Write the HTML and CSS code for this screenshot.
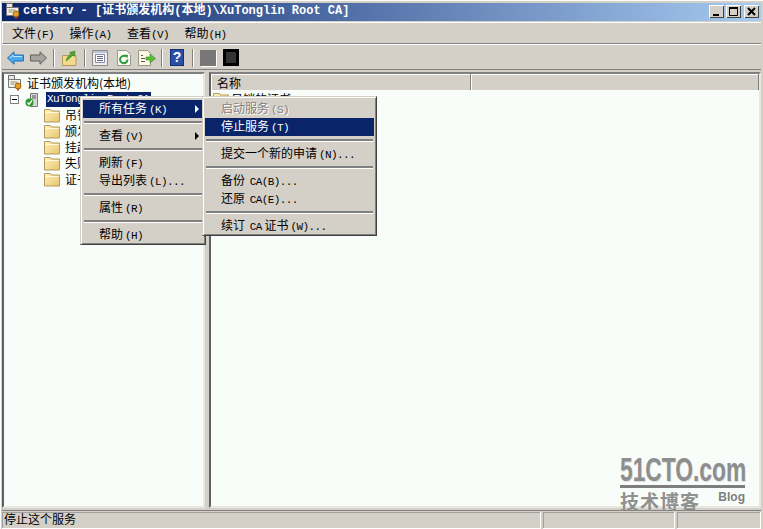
FILE: index.html
```html
<!DOCTYPE html>
<html lang="zh-CN">
<head>
<meta charset="utf-8">
<title>certsrv</title>
<link rel="stylesheet" href="styles.css">
</head>
<body>
<svg class="defs" width="0" height="0" aria-hidden="true">
  <defs>
    <linearGradient id="fold" x1="0" y1="0" x2="1" y2="1"><stop offset="0" stop-color="#fff3c0"/><stop offset="1" stop-color="#e8c56c"/></linearGradient>
    <symbol id="folder" viewBox="0 0 16 16">
      <path d="M.5 2.500h6l1 1.500h8v11H.5z" fill="url(#fold)" stroke="#b59a5a"/>
      <path d="M1 5.500h14" stroke="#fff8d8"/>
    </symbol>
    <symbol id="cert" viewBox="0 0 16 16">
      <path d="M1.500.5h6v4h-6z" fill="#e8e8e8" stroke="#6a6a6a"/>
      <path d="M1.500 4.500h12v8h-12z" fill="#f6f2e4" stroke="#777"/>
      <path d="M3.500 7h7M3.500 9h4" stroke="#8a8a8a"/>
      <circle cx="11" cy="11" r="3" fill="#e0a030" stroke="#a06810"/>
      <path d="M10 13.500v2.500l1-1 1 1v-2.500" fill="#c04020"/>
    </symbol>
  </defs>
</svg>
<div class="window">
  <header class="titlebar">
    <svg class="title-icon" width="16" height="16"><use href="#cert"/></svg>
    <span class="title-text">certsrv - [证书颁发机构(本地)\XuTonglin Root CA]</span>
    <div class="win-buttons">
      <span class="win-btn"><svg width="15" height="13"><path d="M4 9h6v2H4z" fill="#000"/></svg></span>
      <span class="win-btn"><svg width="15" height="13"><path d="M3.500 2.500h8v8h-8z" fill="none" stroke="#000"/><path d="M3 2h9v2H3z" fill="#000"/></svg></span>
      <span class="win-btn close"><svg width="15" height="13"><path d="M4 3l7 7M11 3l-7 7" stroke="#000" stroke-width="2"/></svg></span>
    </div>
  </header>

  <nav class="menubar">
    <span class="menu-top">文件<i>(F)</i></span>
    <span class="menu-top">操作<i>(A)</i></span>
    <span class="menu-top">查看<i>(V)</i></span>
    <span class="menu-top">帮助<i>(H)</i></span>
  </nav>

  <div class="toolbar">
    <svg class="tool t-back" width="17" height="14" viewBox="0 0 17 14"><path d="M.5 7L7 .8V4h9.500v6H7v3.200z" fill="#4aa8ec" stroke="#1f6fb5"/><path d="M3 7l3-3v1.500h9" fill="none" stroke="#bfe6ff"/></svg>
    <svg class="tool t-fwd" width="17" height="14" viewBox="0 0 17 14"><path d="M16.500 7L10 .8V4H.5v6H10v3.200z" fill="#a4a4a0" stroke="#5e5e5a"/></svg>
    <span class="tsep s1"></span>
    <svg class="tool t-up" width="15" height="16" viewBox="0 0 15 16"><path d="M.5 5.500h13.500v10H.5z" fill="#f2d98c" stroke="#b59a5a"/><path d="M4 11C5 7 7 5 9 4L7.500 2.500 13 1l-.5 5.500L11 5C9 7 7 9 4 11z" fill="#4ea52c" stroke="#2f7a18" stroke-width=".5"/></svg>
    <span class="tsep s2"></span>
    <svg class="tool t-doc" width="16" height="16" viewBox="0 0 16 16"><path d="M.5.5h15v15H.5z" fill="#eef0f0" stroke="#8a8a8a"/><path d="M1 1h14v2H1z" fill="#b8c4d0"/><path d="M3.500 4.500h9v8h-9z" fill="#fff" stroke="#88a"/><path d="M5 6.500h6M5 8.500h6M5 10.500h6" stroke="#667"/></svg>
    <svg class="tool t-ref" width="14" height="16" viewBox="0 0 14 16"><path d="M.5.5h9l4 4v11H.5z" fill="#fbfbf4" stroke="#9a9a90"/><path d="M10.500 9.500a3.700 3.700 0 1 1-1.500-3" fill="none" stroke="#2f9a3a" stroke-width="2"/><path d="M7.500 4.500l3.500.5-.5 3.500z" fill="#2f9a3a"/></svg>
    <svg class="tool t-exp" width="18" height="16" viewBox="0 0 18 16"><path d="M.5.5h9l3 3v12H.5z" fill="#fbf8e4" stroke="#9a9a80"/><path d="M3 5.500h2M3 8.500h4M3 11.500h4" stroke="#555"/><path d="M8 7h4V4l5.500 4.500L12 13v-3H8z" fill="#5cba3c" stroke="#338a1c" stroke-width=".6"/></svg>
    <span class="tsep s3"></span>
    <span class="tool t-help">?</span>
    <span class="tsep s4"></span>
    <span class="tool t-gray"></span>
    <span class="tool t-black"></span>
  </div>

  <main class="panes">
    <section class="tree">
      <div class="node root"><svg width="16" height="16"><use href="#cert"/></svg><span>证书颁发机构(本地)</span></div>
      <div class="node server">
        <span class="expander"></span>
        <svg class="srv" width="14" height="14" viewBox="0 0 14 14"><path d="M5.500.5h7v13h-7z" fill="#d8d8d8" stroke="#777"/><path d="M7 3h4M7 5h4" stroke="#555"/><circle cx="4.500" cy="9.500" r="4" fill="#2a9a2a"/><path d="M2.500 9.500l1.500 2 3-4" fill="none" stroke="#fff" stroke-width="1.300"/></svg>
        <span class="selected">XuTonglin Root CA</span>
      </div>
      <div class="node child"><svg width="16" height="16"><use href="#folder"/></svg><span>吊销的证书</span></div>
      <div class="node child"><svg width="16" height="16"><use href="#folder"/></svg><span>颁发的证书</span></div>
      <div class="node child"><svg width="16" height="16"><use href="#folder"/></svg><span>挂起的申请</span></div>
      <div class="node child"><svg width="16" height="16"><use href="#folder"/></svg><span>失败的申请</span></div>
      <div class="node child"><svg width="16" height="16"><use href="#folder"/></svg><span>证书模板</span></div>
    </section>
    <section class="list">
      <div class="list-head"><span class="col c1">名称</span><span class="col c2"></span></div>
      <div class="list-row"><svg width="16" height="16"><use href="#folder"/></svg><span>吊销的证书</span></div>
    </section>
  </main>

  <footer class="statusbar">
    <span class="st st1">停止这个服务</span>
    <span class="st st2"></span>
    <span class="st st3"></span>
  </footer>

  <div class="ctx ctx-left">
    <div class="item active sub">所有任务<i>(K)</i></div>
    <div class="sep"></div>
    <div class="item sub">查看<i>(V)</i></div>
    <div class="sep"></div>
    <div class="item">刷新<i>(F)</i></div>
    <div class="item">导出列表<i>(L)...</i></div>
    <div class="sep"></div>
    <div class="item">属性<i>(R)</i></div>
    <div class="sep"></div>
    <div class="item">帮助<i>(H)</i></div>
  </div>

  <div class="ctx ctx-right">
    <div class="item disabled">启动服务<i>(S)</i></div>
    <div class="item active">停止服务<i>(T)</i></div>
    <div class="sep"></div>
    <div class="item">提交一个新的申请<i>(N)...</i></div>
    <div class="sep"></div>
    <div class="item">备份 <i>CA(B)...</i></div>
    <div class="item">还原 <i>CA(E)...</i></div>
    <div class="sep"></div>
    <div class="item">续订 <i>CA</i> 证书<i>(W)...</i></div>
  </div>

  <div class="watermark">
    <div class="wm-logo"><span class="wm-word">51CTO.com</span></div>
    <div class="wm-sub"><span class="wm-cn">技术博客</span><span class="wm-blog">Blog</span></div>
  </div>
</div>
</body>
</html>
```
FILE: styles.css
```css
* { box-sizing: border-box; }
html, body { margin: 0; padding: 0; }
body { width: 763px; height: 529px; overflow: hidden; background: #d4d0c8; font: 12px/16px "Noto Sans CJK SC", "Liberation Sans", sans-serif; color: #000; }
.defs { position: absolute; }
i { font: 11px/16px "Liberation Mono", monospace; letter-spacing: -.6px; }

.window { position: relative; width: 763px; height: 529px; display: flex; flex-direction: column; padding: 3px 2px 0 2px; background: #d4d0c8; box-shadow: inset 1px 1px 0 #fff; overflow: hidden; }

.titlebar { height: 18px; flex: none; display: flex; align-items: center; padding: 0 2px 2px 3px; background: linear-gradient(90deg, #0a246a, #a6caf0); }
.title-icon { flex: none; }
.title-text { margin-left: 2px; color: #fff; font: bold 12px/16px "Liberation Mono", "Noto Sans CJK SC", monospace; white-space: nowrap; }
.win-buttons { margin-left: auto; display: flex; gap: 2px; }
.win-btn { width: 15px; height: 13px; background: #d4d0c8; box-shadow: inset 1px 1px 0 #fff, inset -1px -1px 0 #404040; display: block; }
.win-btn svg { display: block; }
.close { margin-left: 1px; }

.menubar { height: 22px; flex: none; margin-top: 1px; display: flex; align-items: center; gap: 16.500px; padding: 2px 0 0 9px; border-top: 1px solid #fff; border-bottom: 1px solid #808080; border-left: 1px solid #fff; }
.menu-top { white-space: nowrap; width: 41px; }

.toolbar { height: 26px; flex: none; display: flex; align-items: center; padding: 1px 0 0 5px; border-top: 1px solid #fff; border-bottom: 1px solid #808080; }
.tool { display: block; flex: none; }
.t-fwd { margin-left: 6px; }
.tsep { width: 2px; height: 18px; flex: none; background: #808080; border-right: 1px solid #fff; }
.s1 { margin: 0 7px 0 6px; }
.s2 { margin: 0 6px 0 7px; }
.s3 { margin: 0 7px 0 5px; }
.s4 { margin: 0 6px 0 8px; }
.t-ref { margin-left: 9px; }
.t-exp { margin-left: 7px; }
.t-help { width: 14px; height: 17px; background: #2a4fa8; border: 1px solid #14306e; color: #fff; font: bold 14px/15px "Liberation Sans", sans-serif; text-align: center; }
.t-gray { width: 16px; height: 16px; background: #777; box-shadow: 1px 1px 0 #fff; }
.t-black { width: 16px; height: 17px; margin-left: 7px; background: #333; border: 3px solid #000; }

.panes { flex: 1; min-height: 0; display: flex; gap: 4px; margin-top: 2px; }
.tree, .list { background: #f8fdf9; border: 2px solid; border-color: #808080 #e8e8e0 #e8e8e0 #606060; }
.tree { width: 203px; flex: none; overflow: hidden; padding-top: 1px; }
.list { flex: 1; min-width: 0; overflow: hidden; }

.node { display: flex; align-items: center; height: 16px; white-space: nowrap; }
.root { gap: 4px; padding-left: 3px; }
.server { height: 15px; margin-top: 1px; padding-left: 6px; }
.expander { position: relative; width: 9px; height: 9px; flex: none; border: 1px solid #808080; background: #fff; }
.expander::after { content: ""; position: absolute; left: 1px; top: 3px; width: 5px; height: 1px; background: #000; }
.srv { margin-left: 6px; flex: none; }
.selected { margin-left: 7px; width: 105px; height: 15px; background: #0a246a; color: #fff; font: 11px/15px "Liberation Mono", monospace; letter-spacing: -.6px; padding-left: 1px; }
.child { padding-left: 40px; gap: 5px; }

.list-head { display: flex; height: 16px; background: #d4d0c8; }
.col { display: block; height: 16px; border-right: 1px solid #808080; box-shadow: inset 1px 1px 0 #fff; padding-left: 6px; line-height: 17px; }
.c1 { width: 260px; }
.c2 { flex: 1; }
.list-row { display: flex; align-items: center; gap: 2px; height: 16px; padding-left: 2px; margin-top: 1px; }

.statusbar { height: 19px; flex: none; margin-top: 2px; display: flex; gap: 2px; border-top: 1px solid #808080; padding-top: 1px; }
.st { height: 17px; box-shadow: inset -1px -1px 0 #fff, inset 1px 1px 0 #a0a0a0; padding-left: 2px; line-height: 13px; }
.st1 { width: 539px; }
.st2 { width: 132px; }
.st3 { flex: 1; }

.ctx { position: absolute; top: 96px; background: #d4d0c8; padding: 3px 2px; border: 1px solid; border-color: #d4d0c8 #404040 #404040 #d4d0c8; box-shadow: inset 1px 1px 0 #fff, inset -1px -1px 0 #808080; }
.ctx-left { left: 80px; width: 126px; height: 149px; }
.ctx-right { left: 202px; width: 175px; height: 140px; }
.item { position: relative; height: 18px; line-height: 16px; padding-left: 16px; white-space: nowrap; }
.item i { margin-left: 2px; }
.active { background: #0a246a; color: #fff; }
.disabled { color: #808080; text-shadow: 1px 1px 0 #fff; }
.sub::after { content: ""; position: absolute; right: 4px; top: 5px; border: 4px solid transparent; border-left-color: currentColor; border-right-width: 0; }
.sep { height: 9px; position: relative; }
.sep::before { content: ""; position: absolute; left: 1px; right: 1px; top: 3px; height: 2px; background: #808080; border-bottom: 1px solid #fff; }

.watermark { position: absolute; left: 620px; top: 455px; width: 125px; pointer-events: none; }
.wm-logo { height: 33px; border-bottom: 3px solid #7e7e7e; }
.wm-word { display: block; width: 176px; font: bold 33px/30px "Liberation Sans", sans-serif; color: #8e8e8e; white-space: nowrap; text-shadow: 1px 1px 0 #ddd; transform: scaleX(.69); transform-origin: 0 0; }
.wm-sub { display: flex; justify-content: space-between; margin-top: 1px; }
.wm-cn { font: bold 19px/24px "Noto Sans CJK SC", sans-serif; color: #909090; letter-spacing: 1px; white-space: nowrap; }
.wm-blog { font: bold 12px/16px "Liberation Sans", sans-serif; color: #7e7e7e; }
```
